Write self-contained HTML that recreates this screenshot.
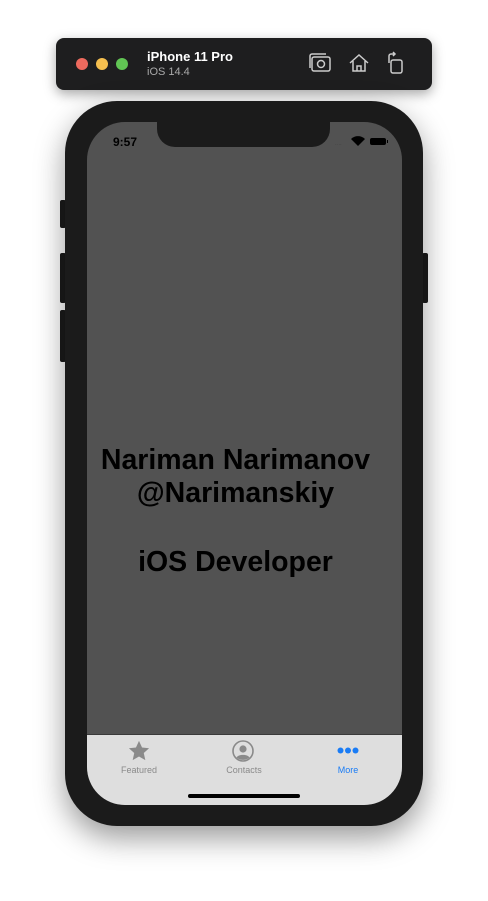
<!DOCTYPE html><html><head><style>
body{margin:0;width:488px;height:901px;background:#fff;position:relative;overflow:hidden;font-family:"Liberation Sans",sans-serif}
.tb{position:absolute;left:56px;top:38px;width:376px;height:52px;background:#1e1e1f;border-radius:8px;box-shadow:0 4px 12px rgba(0,0,0,.35)}
.dot{position:absolute;top:20px;width:12px;height:12px;border-radius:50%}
.btn{position:absolute;background:#1b1b1b;border-radius:2px}
.phone{position:absolute;left:65px;top:101px;width:358px;height:725px;background:#1b1b1b;border-radius:52px;box-shadow:0 12px 30px rgba(0,0,0,.4)}
.screen{position:absolute;left:87px;top:122px;width:315px;height:683px;background:#525252;border-radius:38px;overflow:hidden}
.notch{position:absolute;left:70px;top:0;width:173px;height:25px;background:#1b1b1b;border-radius:0 0 18px 18px}
.txt{position:absolute;left:-9px;width:315px;text-align:center;font-weight:bold;font-size:28.5px;color:#000;white-space:nowrap}
.tab{position:absolute;left:0;top:612px;width:315px;height:71px;background:#dedede;border-top:1px solid #3a3a3a}
.lab{position:absolute;top:30px;font-size:9px;color:#8a8a8a;text-align:center;width:80px}
</style></head><body>
<div class="tb">
<div class="dot" style="left:20px;background:#ed6a5e"></div>
<div class="dot" style="left:40px;background:#f5bf4f"></div>
<div class="dot" style="left:60px;background:#61c554"></div>
<div style="position:absolute;left:91px;top:11px;color:#fff;font-weight:bold;font-size:13px">iPhone 11 Pro</div>
<div style="position:absolute;left:91px;top:28px;color:#aaa;font-size:11px">iOS 14.4</div>
<svg style="position:absolute;left:252px;top:14px" width="24" height="22" viewBox="0 0 24 22" fill="none" stroke="#ccc" stroke-width="1.5"><rect x="4" y="5" width="18" height="14" rx="2"/><path d="M2 16V4a2 2 0 0 1 2-2h14"/><circle cx="13" cy="12" r="3.5"/></svg>
<svg style="position:absolute;left:292px;top:14px" width="22" height="22" viewBox="0 0 22 22" fill="none" stroke="#ccc" stroke-width="1.5"><path d="M2 11L11 3l9 8M5 9v10h12V9M9 19v-5h4v5"/></svg>
<svg style="position:absolute;left:330px;top:13px" width="18" height="24" viewBox="0 0 18 24" fill="none" stroke="#ccc" stroke-width="1.5"><rect x="5" y="9" width="11" height="13" rx="2"/><path d="M3 12V5a2 2 0 0 1 2-2h4M7 1l2 2-2 2"/></svg>
</div>
<div class="btn" style="left:60px;top:200px;width:6px;height:28px"></div>
<div class="btn" style="left:60px;top:253px;width:6px;height:50px"></div>
<div class="btn" style="left:60px;top:310px;width:6px;height:52px"></div>
<div class="btn" style="left:422px;top:253px;width:6px;height:50px"></div>
<div class="phone"></div>
<div class="screen">
<div class="notch"></div>
<div style="position:absolute;left:26px;top:13px;font-size:12px;font-weight:bold;color:#000">9:57</div>
<div style="position:absolute;left:248px;top:19px;font-size:6px;color:#444">....</div>
<svg style="position:absolute;left:264px;top:14px" width="14" height="10" viewBox="0 0 14 10"><path d="M7 10L0 3a10 10 0 0 1 14 0z" fill="#000"/></svg>
<div style="position:absolute;left:283px;top:16px;width:16px;height:7px;background:#000;border-radius:2px"></div>
<div style="position:absolute;left:300px;top:18px;width:1px;height:3px;background:#000"></div>
<div class="txt" style="top:322px">Nariman Narimanov</div>
<div class="txt" style="top:355px">@Narimanskiy</div>
<div class="txt" style="top:424px">iOS Developer</div>
<div class="tab">
<svg style="position:absolute;left:40px;top:5px" width="24" height="22" viewBox="0 0 24 24"><path d="M12 1l3.3 7.2 7.7.8-5.8 5.2 1.7 7.8L12 18l-6.9 4 1.7-7.8L1 9l7.7-.8z" fill="#8a8a8a"/></svg>
<div class="lab" style="left:12px">Featured</div>
<svg style="position:absolute;left:145px;top:5px" width="22" height="22" viewBox="0 0 22 22"><circle cx="11" cy="11" r="10" fill="none" stroke="#8a8a8a" stroke-width="1.6"/><circle cx="11" cy="9" r="3.6" fill="#8a8a8a"/><path d="M4.5 17.5c2-3.5 11-3.5 13 0a10 10 0 0 1-13 0z" fill="#8a8a8a"/></svg>
<div class="lab" style="left:117px">Contacts</div>
<svg style="position:absolute;left:250px;top:12px" width="22" height="7"><circle cx="3.5" cy="3.5" r="3" fill="#1a7cf5"/><circle cx="11" cy="3.5" r="3" fill="#1a7cf5"/><circle cx="18.5" cy="3.5" r="3" fill="#1a7cf5"/></svg>
<div class="lab" style="left:221px;color:#1a7cf5">More</div>
<div style="position:absolute;left:101px;top:59px;width:112px;height:4px;background:#000;border-radius:2px"></div>
</div>
</div>
</body></html>
